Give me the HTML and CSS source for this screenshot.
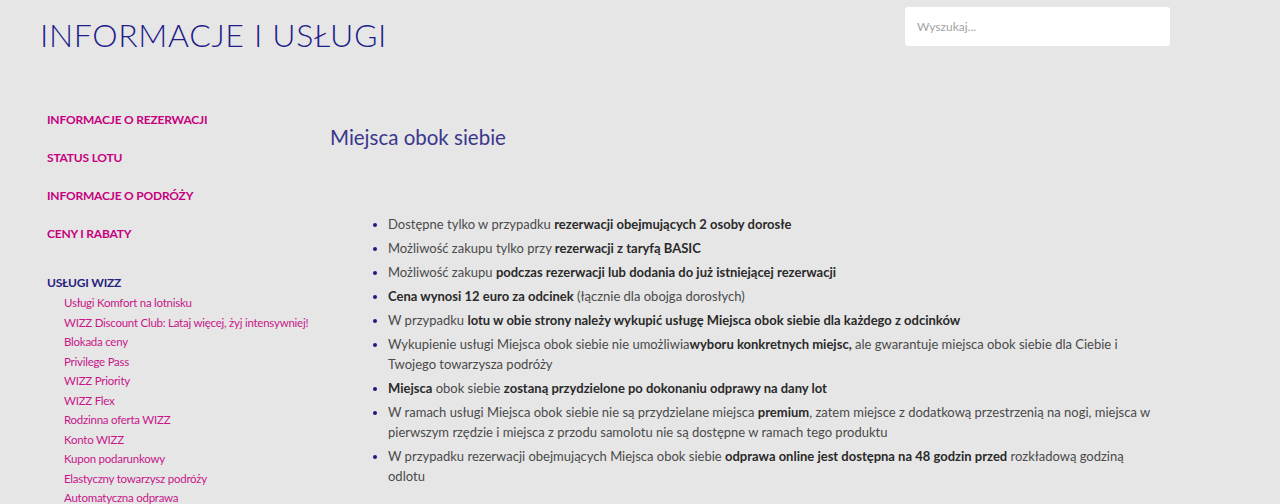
FILE: index.html
```html
<!DOCTYPE html>
<html lang="pl">
<head>
<meta charset="utf-8">
<title>Informacje i usługi</title>
<link rel="stylesheet" href="styles.css">
</head>
<body>
<header class="top">
  <h1 class="page-title">INFORMACJE I USŁUGI</h1>
  <div class="search"><input class="search-input" type="text" placeholder="Wyszukaj..."></div>
</header>
<div class="layout">
  <aside class="sidebar">
    <ul class="menu">
      <li class="menu-item"><a href="#">INFORMACJE O REZERWACJI</a></li>
      <li class="menu-item"><a href="#">STATUS LOTU</a></li>
      <li class="menu-item"><a href="#">INFORMACJE O PODRÓŻY</a></li>
      <li class="menu-item"><a href="#">CENY I RABATY</a></li>
      <li class="menu-group">
        <a class="group-title" href="#">USŁUGI WIZZ</a>
        <ul class="submenu">
          <li><a href="#">Usługi Komfort na lotnisku</a></li>
          <li><a href="#">WIZZ Discount Club: Lataj więcej, żyj intensywniej!</a></li>
          <li><a href="#">Blokada ceny</a></li>
          <li><a href="#">Privilege Pass</a></li>
          <li><a href="#">WIZZ Priority</a></li>
          <li><a href="#">WIZZ Flex</a></li>
          <li><a href="#">Rodzinna oferta WIZZ</a></li>
          <li><a href="#">Konto WIZZ</a></li>
          <li><a href="#">Kupon podarunkowy</a></li>
          <li><a href="#">Elastyczny towarzysz podróży</a></li>
          <li><a href="#">Automatyczna odprawa</a></li>
        </ul>
      </li>
    </ul>
  </aside>
  <main class="content">
    <h2 class="article-title">Miejsca obok siebie</h2>
    <ul class="facts">
      <li>Dostępne tylko w przypadku <b>rezerwacji obejmujących 2 osoby dorosłe</b></li>
      <li>Możliwość zakupu tylko przy <b>rezerwacji z taryfą BASIC</b></li>
      <li>Możliwość zakupu <b>podczas rezerwacji lub dodania do już istniejącej rezerwacji</b></li>
      <li><b>Cena wynosi 12 euro za odcinek</b> (łącznie dla obojga dorosłych)</li>
      <li>W przypadku <b>lotu w obie strony należy wykupić usługę Miejsca obok siebie dla każdego z odcinków</b></li>
      <li>Wykupienie usługi Miejsca obok siebie nie umożliwia<b>wyboru konkretnych miejsc,</b> ale gwarantuje miejsca obok siebie dla Ciebie i Twojego towarzysza podróży</li>
      <li><b>Miejsca</b> obok siebie <b>zostaną przydzielone po dokonaniu odprawy na dany lot</b></li>
      <li>W ramach usługi Miejsca obok siebie nie są przydzielane miejsca <b>premium</b>, zatem miejsce z dodatkową przestrzenią na nogi, miejsca w pierwszym rzędzie i miejsca z przodu samolotu nie są dostępne w ramach tego produktu</li>
      <li>W przypadku rezerwacji obejmujących Miejsca obok siebie <b>odprawa online jest dostępna na 48 godzin przed</b> rozkładową godziną odlotu</li>
    </ul>
  </main>
</div>
</body>
</html>
```
FILE: styles.css
```css
html, body {
  margin: 0;
  padding: 0;
}
body {
  background: #e6e6e6;
  font-family: "Lato", "Open Sans", sans-serif;
  color: #444;
  height: 504px;
  overflow: hidden;
}
a {
  text-decoration: none;
  color: inherit;
}
ul {
  list-style: none;
  margin: 0;
  padding: 0;
}
.top {
  display: flex;
  justify-content: space-between;
  align-items: flex-start;
  height: 101px;
}
.page-title {
  margin: 16px 0 0 40px;
  font-family: "Lato", sans-serif;
  font-weight: 300;
  font-size: 32px;
  line-height: 38px;
  color: #211d8a;
  letter-spacing: 0.65px;
}
.search {
  margin: 7px 110px 0 0;
}
.search-input {
  box-sizing: border-box;
  width: 265px;
  height: 39px;
  border: none;
  border-radius: 3px;
  background: #fff;
  padding: 0 12px;
  font-family: "Lato", sans-serif;
  font-size: 12px;
  color: #999;
  outline: none;
}
.search-input::placeholder {
  color: #a3a3a3;
}
.layout {
  display: flex;
}
.sidebar {
  width: 330px;
  flex: none;
  padding-left: 47px;
  box-sizing: border-box;
  white-space: nowrap;
}
.menu-item {
  height: 38px;
  line-height: 38px;
  font-size: 12px;
  font-weight: 700;
  color: #c6007e;
  letter-spacing: -0.2px;
}
.menu-group {
  margin-top: 20px;
}
.group-title {
  display: block;
  line-height: 20px;
  font-size: 12px;
  font-weight: 700;
  color: #27237f;
  letter-spacing: -0.2px;
}
.submenu {
  padding-left: 17px;
}
.submenu li {
  line-height: 19.5px;
  font-size: 11.5px;
  letter-spacing: -0.25px;
  color: #c8168a;
}
.content {
  flex: 1;
}
.article-title {
  margin: 24px 0 0 0;
  font-weight: 400;
  font-size: 20.5px;
  line-height: 24px;
  color: #3a378c;
}
.facts {
  list-style: disc;
  margin: 65px 0 0 0;
  padding-left: 58px;
  width: 762px;
  font-size: 13px;
  line-height: 20px;
  color: #4a4a4a;
}
.facts li {
  margin-bottom: 4px;
}
.facts li::marker {
  color: #1e1a80;
}
.facts b {
  color: #2a2a2a;
}
```
